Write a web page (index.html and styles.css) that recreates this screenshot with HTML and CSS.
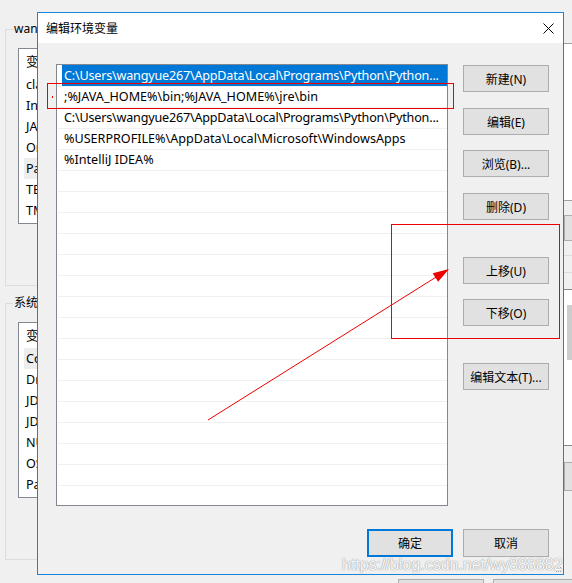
FILE: index.html
```html
<!DOCTYPE html>
<html lang="zh-CN">
<head>
  <meta charset="UTF-8" />
  <title>编辑环境变量</title>
  <link rel="stylesheet" href="styles.css">
</head>
<body>
  <!-- 背后的环境变量窗口 (被对话框挡住, 只露出左边一截) -->
  <div class="back-win">
    <fieldset class="group">
      <legend>wangyue267 的用户变量(U)</legend>
      <div class="var-list">
        <div class="var-row">变量</div>
        <div class="var-row">classpath</div>
        <div class="var-row">IntelliJ IDEA</div>
        <div class="var-row">JAVA_HOME</div>
        <div class="var-row">OneDrive</div>
        <div class="var-row hot">Path</div>
        <div class="var-row">TEMP</div>
        <div class="var-row">TMP</div>
      </div>
    </fieldset>
    <fieldset class="group">
      <legend>系统变量(S)</legend>
      <div class="var-list">
        <div class="var-row">变量</div>
        <div class="var-row hot">ComSpec</div>
        <div class="var-row">DriverData</div>
        <div class="var-row">JDK_HOME</div>
        <div class="var-row">JDK_PATH</div>
        <div class="var-row">NUMBER_OF_PROCESSORS</div>
        <div class="var-row">OS</div>
        <div class="var-row">Path</div>
      </div>
    </fieldset>
  </div>

  <!-- 右边露出来的另一个窗口 -->
  <div class="side-win">
    <div class="sw-list"></div>
    <div class="sw-btn"></div>
    <div class="sw-line"></div>
    <div class="sw-line"></div>
    <div class="sw-list sw-list2"><div class="sw-scroll"></div></div>
    <div class="sw-btn sw-btn2"></div>
  </div>

  <div class="back-btns">
    <div class="back-btn"></div>
    <div class="back-btn"></div>
  </div>

  <!-- 编辑环境变量 对话框 -->
  <div class="dialog">
    <div class="titlebar">
      <span>编辑环境变量</span>
      <svg class="close" width="11" height="11" viewBox="0 0 11 11">
        <path d="M0.5 0.5 L10.5 10.5 M10.5 0.5 L0.5 10.5" stroke="#000" stroke-width="1" fill="none"/>
      </svg>
    </div>

    <div class="main">
      <div class="path-list" id="pathList">
        <div class="path-row sel long"><span>C:\Users\wangyue267\AppData\Local\Programs\Python\Python...</span></div>
        <div class="path-row"><span>;%JAVA_HOME%\bin;%JAVA_HOME%\jre\bin</span></div>
        <div class="path-row long"><span>C:\Users\wangyue267\AppData\Local\Programs\Python\Python...</span></div>
        <div class="path-row"><span>%USERPROFILE%\AppData\Local\Microsoft\WindowsApps</span></div>
        <div class="path-row"><span>%IntelliJ IDEA%</span></div>
      </div>

      <div class="side">
        <button class="btn">新建(N)</button>
        <button class="btn b2">编辑(E)</button>
        <button class="btn b3">浏览(B)...</button>
        <button class="btn b2">删除(D)</button>
        <button class="btn gap">上移(U)</button>
        <button class="btn b3">下移(O)</button>
        <button class="btn gap">编辑文本(T)...</button>
      </div>
    </div>

    <div class="footer">
      <button class="btn btn-ok">确定</button>
      <button class="btn btn-cancel">取消</button>
    </div>

    <svg class="grip" width="7" height="7" viewBox="0 0 7 7">
      <rect x="5" y="1" width="1" height="1" fill="#a0a0a0"/>
      <rect x="3" y="3" width="1" height="1" fill="#a0a0a0"/>
      <rect x="5" y="3" width="1" height="1" fill="#a0a0a0"/>
      <rect x="1" y="5" width="1" height="1" fill="#a0a0a0"/>
      <rect x="3" y="5" width="1" height="1" fill="#a0a0a0"/>
      <rect x="5" y="5" width="1" height="1" fill="#a0a0a0"/>
    </svg>
  </div>

  <!-- 红色标注 -->
  <svg class="marks" width="572" height="583">
    <rect x="47.5" y="83.5" width="406" height="25" fill="none" stroke="#ee0000"/>
    <rect x="52" y="96" width="1" height="2" fill="#ee0000"/>
    <rect x="391.5" y="224.5" width="168" height="114" fill="none" stroke="#ee0000"/>
    <line x1="208" y1="420" x2="437" y2="276.5" stroke="#ee0000" stroke-width="1"/>
    <polygon points="449,269 438.1,281.7 432.7,273.3" fill="#ee0000"/>
  </svg>

  <div class="watermark">https://blog.csdn.net/wy888882</div>

  <script>
    // 空白行补满列表
    const list = document.getElementById('pathList');
    for (let i = 0; i < 16; i++) {
      const row = document.createElement('div');
      row.className = 'path-row';
      row.innerHTML = '<span></span>';
      list.appendChild(row);
    }
  </script>
</body>
</html>
```

FILE: styles.css
```css
/* ---------- 基本 ---------- */
* {
  box-sizing: border-box;
}

body {
  margin: 0;
  width: 572px;
  height: 583px;
  overflow: hidden;
  position: relative;
  background: #f0f0f0;
  color: #000;
  font-family: "Noto Sans", "Noto Sans CJK SC", sans-serif;
  font-size: 12px;
}

/* ---------- 背后的窗口 ---------- */
.back-win {
  position: absolute;
  left: 0;
  top: 0;
  width: 38px;
  height: 583px;
  overflow: hidden;
  padding: 21px 0 0 5px;
}

.group {
  margin: 0;
  width: 540px;
  height: 265px;
  padding: 11px 0 0 7px;
  border: 1px solid #dcdcdc;
}

.group + .group {
  margin-top: 9px;
}

.group legend {
  padding: 0 1px;
  line-height: 16px;
  white-space: nowrap;
}

.var-list {
  margin-left: 5px;
  width: 520px;
  height: 176px;
  background: #fff;
  border: 1px solid #828790;
}

.var-row {
  height: 21px;
  line-height: 21px;
  margin-left: 5px;
  padding-left: 2px;
  font-size: 12.6px;
  white-space: nowrap;
}

.var-row:first-child {
  height: 25px;
  line-height: 25px;
}

.var-row.hot {
  background: #ededed;
}

.side-win {
  position: absolute;
  left: 564px;
  top: 43px;
  width: 20px;
}

.sw-list {
  height: 158px;
  background: #fff;
  border: 1px solid #a0a0a0;
  border-left: none;
}

.sw-btn {
  margin-top: 14px;
  height: 26px;
  background: #e1e1e1;
  border: 1px solid #adadad;
}

.sw-line {
  margin-top: 14px;
  height: 1px;
  background: #dcdcdc;
}

.sw-line + .sw-line {
  margin-top: 16px;
}

.sw-list2 {
  margin-top: 16px;
  height: 157px;
  border-color: #828790;
  padding: 15px 0 0 3px;
}

.sw-scroll {
  height: 55px;
  background: #cdcdcd;
}

.sw-btn2 {
  margin-top: 16px;
  height: 29px;
}

.back-btns {
  position: absolute;
  left: 398px;
  top: 579px;
  display: flex;
  gap: 9px;
}

.back-btn {
  width: 86px;
  height: 20px;
  background: #e1e1e1;
  border: 1px solid #adadad;
}

/* ---------- 对话框 ---------- */
.dialog {
  position: absolute;
  left: 37px;
  top: 12px;
  width: 527px;
  height: 563px;
  background: #f0f0f0;
  border: 1px solid #1883d7;
  display: flex;
  flex-direction: column;
}

.titlebar {
  height: 30px;
  background: #fff;
  display: flex;
  align-items: center;
  justify-content: space-between;
  padding: 0 9px 0 8px;
}

.main {
  display: flex;
  padding: 21px 14px 0 18px;
}

.path-list {
  width: 392px;
  height: 442px;
  background: #fff;
  border: 1px solid #828790;
  overflow: hidden;
}

.path-row {
  height: 21px;
  margin-left: 1px;
  border-top: 1px solid #f0f0f0;
}

.path-row:first-child {
  border-top: none;
}

.path-row span {
  display: block;
  height: 100%;
  margin-left: 4px;
  padding-left: 2px;
  line-height: 20px;
  font-size: 12.6px;
  white-space: nowrap;
  overflow: hidden;
}

.path-row.long span {
  letter-spacing: -0.2px;
}

.path-row.sel span {
  background: #0078d7;
  color: #fff;
  line-height: 21px;
}

.side {
  width: 86px;
  margin-left: 15px;
  display: flex;
  flex-direction: column;
}

.btn {
  height: 27px;
  padding: 0;
  background: #e1e1e1;
  border: 1px solid #adadad;
  font: inherit;
  color: #000;
}

.side .btn:first-child { margin-top: 1px; }
.side .b2 { margin-top: 16px; }
.side .b3 { margin-top: 15px; }
.side .gap { margin-top: 37px; }

.footer {
  display: flex;
  justify-content: flex-end;
  gap: 10px;
  padding: 23px 14px 0 0;
}

.footer .btn {
  width: 86px;
  height: 28px;
}

.btn-ok {
  border: 2px solid #0078d7;
}

.grip {
  position: absolute;
  right: 1px;
  bottom: 1px;
}

/* ---------- 标注 ---------- */
.marks {
  position: absolute;
  left: 0;
  top: 0;
  pointer-events: none;
}

.watermark {
  position: absolute;
  left: 342px;
  top: 556px;
  font-family: "Liberation Sans", Arial, sans-serif;
  font-size: 16px;
  line-height: 18px;
  color: #f8f8f8;
  text-shadow: 0 0 1px #999, 0 0 1px #999;
  white-space: nowrap;
}
```
